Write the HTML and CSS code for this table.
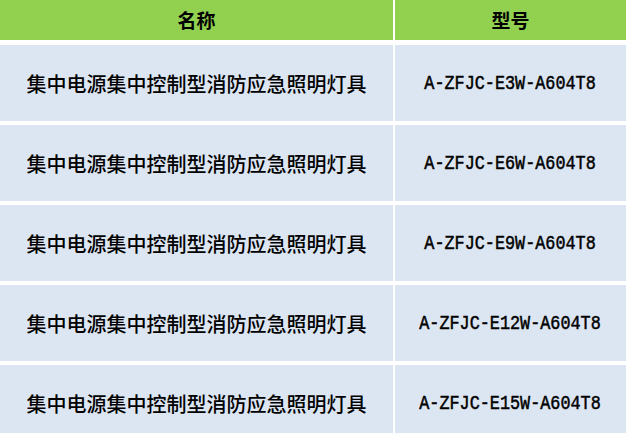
FILE: index.html
```html
<!DOCTYPE html>
<html lang="zh-CN">
<head>
<meta charset="utf-8">
<title>型号表</title>
<link rel="stylesheet" href="styles.css">
</head>
<body>
<div class="table">
  <div class="cell head">名称</div>
  <div class="cell head">型号</div>

  <div class="cell name">集中电源集中控制型消防应急照明灯具</div>
  <div class="cell model"><span class="code">A-ZFJC-E3W-A604T8</span></div>

  <div class="cell name">集中电源集中控制型消防应急照明灯具</div>
  <div class="cell model"><span class="code">A-ZFJC-E6W-A604T8</span></div>

  <div class="cell name">集中电源集中控制型消防应急照明灯具</div>
  <div class="cell model"><span class="code">A-ZFJC-E9W-A604T8</span></div>

  <div class="cell name">集中电源集中控制型消防应急照明灯具</div>
  <div class="cell model"><span class="code">A-ZFJC-E12W-A604T8</span></div>

  <div class="cell name">集中电源集中控制型消防应急照明灯具</div>
  <div class="cell model"><span class="code">A-ZFJC-E15W-A604T8</span></div>
</div>
</body>
</html>
```

FILE: styles.css
```css
html, body {
  margin: 0;
  padding: 0;
  background: #ffffff;
  height: 433px;
  overflow: hidden;
}

.table {
  display: grid;
  grid-template-columns: 393px 1fr;
  grid-template-rows: 41px repeat(5, 76px);
  column-gap: 2px;
  row-gap: 4px;
}

.cell {
  display: flex;
  align-items: center;
  justify-content: center;
  color: #000000;
  background: #dce6f2;
  font-family: "Noto Sans CJK SC", "Liberation Sans", sans-serif;
}

.head {
  background: #92d050;
  font-size: 19px;
  font-weight: 700;
  margin-bottom: 1px;
  padding-bottom: 1px;
}

.name {
  font-size: 20px;
  font-weight: 500;
}

.model {
  font-family: "Liberation Mono", monospace;
  font-size: 20px;
  font-weight: 400;
}

.code {
  display: inline-block;
  transform: scaleX(0.84);
  white-space: nowrap;
  -webkit-text-stroke: 0.5px #000000;
}
```
